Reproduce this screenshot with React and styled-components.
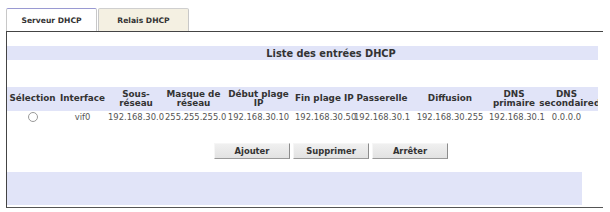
import React from "react";
import styled, { createGlobalStyle } from "styled-components";

const Global = createGlobalStyle`
  html, body { margin: 0; padding: 0; background: #fff; }
  body { font-family: "DejaVu Sans", Verdana, sans-serif; color: #333; }
`;

const Page = styled.div`
  padding: 8px 0 0 6px;
  width: 604px;
  height: 204px;
  overflow: hidden;
`;

const TabBar = styled.div`
  display: flex;
  gap: 1px;
  height: 23px;
`;

const Tab = styled.div`
  width: ${(p) => p.$w}px;
  box-sizing: border-box;
  height: 23px;
  display: flex;
  align-items: center;
  justify-content: center;
  font-size: 7.6px;
  font-weight: bold;
  color: #333;
  background: ${(p) => (p.$active ? "#ffffff" : "#f4f0e2")};
  border-top: 1px solid ${(p) => (p.$active ? "#9a9ad2" : "#cfcfcf")};
  border-left: 1px solid #c8c8c8;
  border-right: 1px solid #c8c8c8;
  border-radius: 2px 2px 0 0;
  padding-top: 1px;
`;

const Panel = styled.div`
  width: 597px;
  height: 177px;
  box-sizing: border-box;
  border-top: 1px solid #444;
  border-left: 1px solid #444;
  border-bottom: 1px solid #555;
  padding-right: 5px;
`;

const Clip = styled.div`
  width: 591px;
  height: 175px;
  overflow: hidden;
  background: #fff;
`;

const Inner = styled.div`
  width: 648px;
`;

const TitleBar = styled.div`
  margin-top: 14px;
  height: 14px;
  background: #e1e4f8;
  text-align: center;
  font-size: 9.8px;
  font-weight: bold;
  line-height: 15px;
  color: #333;
`;

const Table = styled.table`
  margin-top: 27px;
  border-collapse: collapse;
  table-layout: fixed;
  width: 647px;
`;

const HeadRow = styled.tr`
  background: #e1e4f8;
  height: 24px;
`;

const Th = styled.th`
  padding: ${(p) => (p.$low ? "9px 0 0 0" : "0")};
  font-size: 8.8px;
  line-height: 9.2px;
  font-weight: bold;
  color: #333;
  text-align: ${(p) => (p.$low ? "left" : "center")};
  vertical-align: middle;
  white-space: ${(p) => (p.$nowrap ? "nowrap" : "normal")};
  overflow: visible;
`;

const DataRow = styled.tr`
  height: 13px;
`;

const Td = styled.td`
  padding: 0;
  font-size: 8.4px;
  line-height: 13px;
  color: #555;
  text-align: center;
  white-space: nowrap;
  overflow: visible;
`;

const Radio = styled.span`
  display: inline-block;
  width: 8px;
  height: 8px;
  border: 1px solid #9a9a9a;
  border-radius: 50%;
  background: #fff;
  vertical-align: middle;
  margin-top: -1px;
`;

const ButtonRow = styled.div`
  margin-top: 19px;
  display: flex;
  justify-content: center;
  gap: 3px;
`;

const Button = styled.button`
  width: 76px;
  height: 16px;
  box-sizing: border-box;
  padding: 0;
  font-family: "DejaVu Sans", Verdana, sans-serif;
  font-size: 8.4px;
  font-weight: bold;
  color: #333;
  background: linear-gradient(#f0f0f0, #e2e2e2);
  border-top: 1px solid #f6f6f6;
  border-left: 1px solid #f6f6f6;
  border-right: 1px solid #8c8c8c;
  border-bottom: 1px solid #9a9a9a;
`;

const BottomBand = styled.div`
  margin-top: 13px;
  width: 575px;
  height: 33px;
  background: #e1e4f8;
`;

const cols = [51, 49, 58, 57, 73, 58, 58, 78, 50, 55, 60];

const headers = [
  { t: "Sélection", nw: true },
  { t: "Interface", nw: true },
  { t: ["Sous-", "réseau"] },
  { t: ["Masque de", "réseau"] },
  { t: ["Début plage", "IP"] },
  { t: "Fin plage IP", nw: true },
  { t: "Passerelle", nw: true },
  { t: "Diffusion", nw: true },
  { t: ["DNS", "primaire"] },
  { t: ["DNS", "secondaire"] },
  { t: "durée du bail", nw: true, low: true },
];

const row = [
  "vif0",
  "192.168.30.0",
  "255.255.255.0",
  "192.168.30.10",
  "192.168.30.50",
  "192.168.30.1",
  "192.168.30.255",
  "192.168.30.1",
  "0.0.0.0",
  "86400",
];

export default function App() {
  return (
    <>
      <Global />
      <Page>
        <TabBar>
          <Tab $active $w={91}>Serveur DHCP</Tab>
          <Tab $w={91}>Relais DHCP</Tab>
        </TabBar>
        <Panel>
          <Clip>
            <Inner>
              <TitleBar>Liste des entrées DHCP</TitleBar>
              <Table>
                <colgroup>
                  {cols.map((w, i) => (
                    <col key={i} style={{ width: w }} />
                  ))}
                </colgroup>
                <thead>
                  <HeadRow>
                    {headers.map((h, i) => (
                      <Th key={i} $nowrap={h.nw} $low={h.low}>
                        {Array.isArray(h.t) ? (
                          <>
                            {h.t[0]}
                            <br />
                            {h.t[1]}
                          </>
                        ) : (
                          h.t
                        )}
                      </Th>
                    ))}
                  </HeadRow>
                </thead>
                <tbody>
                  <DataRow>
                    <Td>
                      <Radio />
                    </Td>
                    {row.map((v, i) => (
                      <Td key={i}>{v}</Td>
                    ))}
                  </DataRow>
                </tbody>
              </Table>
              <ButtonRow>
                <Button>Ajouter</Button>
                <Button>Supprimer</Button>
                <Button>Arrêter</Button>
              </ButtonRow>
            </Inner>
            <BottomBand />
          </Clip>
        </Panel>
      </Page>
    </>
  );
}
